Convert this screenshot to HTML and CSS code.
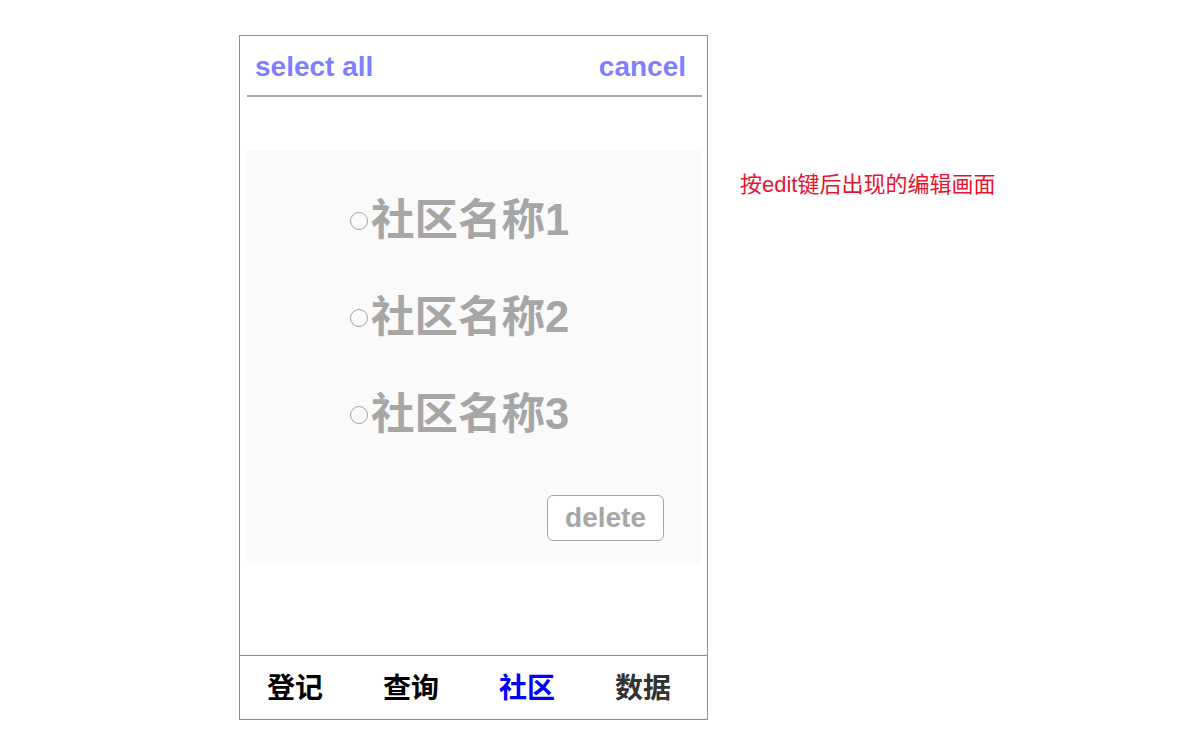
FILE: index.html
```html
<!DOCTYPE html>
<html lang="zh-CN">
<head>
    <meta charset="UTF-8">
    <meta name="viewport" content="width=device-width, initial-scale=1.0">
    <title>社区编辑</title>
    <link rel="stylesheet" href="styles.css">
</head>
<body>
    <div class="page">
        <div class="phone">
            <div class="top-bar">
                <span class="top-link">select all</span>
                <span class="top-link">cancel</span>
            </div>
            <div class="top-line"></div>

            <div class="edit-panel">
                <div class="item"><span class="dot"></span>社区名称1</div>
                <div class="item"><span class="dot"></span>社区名称2</div>
                <div class="item"><span class="dot"></span>社区名称3</div>
                <div class="panel-actions">
                    <button class="delete-btn">delete</button>
                </div>
            </div>

            <div class="tabs">
                <div class="tab">登记</div>
                <div class="tab">查询</div>
                <div class="tab active">社区</div>
                <div class="tab dark">数据</div>
            </div>
        </div>

        <div class="note">按edit键后出现的编辑画面</div>
    </div>
</body>
</html>
```

FILE: styles.css
```css
body {
    margin: 0;
    padding: 0;
    background-color: #ffffff;
    font-family: 'Liberation Sans', 'Noto Sans CJK SC', sans-serif;
}

.page {
    display: flex;
    align-items: flex-start;
    padding-top: 35px;
    padding-left: 239px;
}

.phone {
    width: 467px;
    height: 683px;
    border: 1px solid #8c8c8c;
    display: flex;
    flex-direction: column;
}

.top-bar {
    height: 59px;
    display: flex;
    justify-content: space-between;
    align-items: center;
    padding: 2px 21px 0 15px;
    box-sizing: border-box;
}

.top-link {
    font-size: 28px;
    font-weight: bold;
    color: #7f7fff;
}

.top-line {
    height: 2px;
    margin: 0 5px 0 7px;
    background-color: #a9a9a9;
}

.edit-panel {
    margin: 53px 6px 0 7px;
    height: 413px;
    box-sizing: border-box;
    padding: 18px 37px 0 103px;
    background-color: #fafafa;
    display: flex;
    flex-direction: column;
}

.item {
    height: 97px;
    display: flex;
    align-items: center;
    font-size: 43.5px;
    font-weight: bold;
    color: #a6a6a6;
}

.dot {
    width: 16px;
    height: 16px;
    border: 1.5px solid #a6a6a6;
    border-radius: 50%;
    margin-right: 3px;
    margin-top: 9px;
}

.panel-actions {
    display: flex;
    justify-content: flex-end;
    margin-top: 36px;
}

.delete-btn {
    font-family: 'Liberation Sans', sans-serif;
    font-size: 28px;
    font-weight: bold;
    color: #a6a6a6;
    background-color: #ffffff;
    border: 1px solid #a6a6a6;
    border-radius: 6px;
    width: 117px;
    height: 46px;
    padding: 0;
}

.tabs {
    margin-top: auto;
    height: 64px;
    border-top: 1px solid #8c8c8c;
    display: grid;
    grid-template-columns: repeat(4, 116px);
    box-sizing: border-box;
    padding-bottom: 4px;
}

.tab {
    display: flex;
    align-items: center;
    justify-content: flex-start;
    padding-left: 27px;
    font-size: 28px;
    font-weight: bold;
    color: #000000;
}

.tab.active {
    color: #0000ff;
}

.tab.dark {
    color: #333333;
}

.note {
    margin-left: 32px;
    margin-top: 131px;
    font-size: 22px;
    color: #e8132f;
}
```
